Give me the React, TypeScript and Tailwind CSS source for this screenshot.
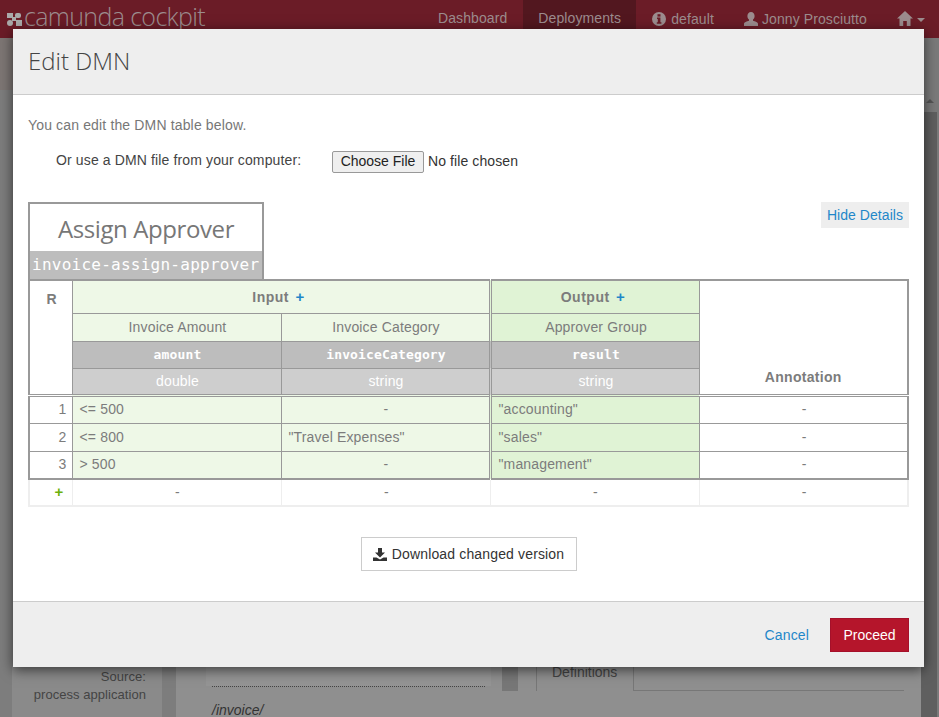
const ARIAL = 'font-["Liberation_Sans",Arial,sans-serif]';

const rules = [
  { n: 1, amount: '<= 500', category: '-', group: '"accounting"' },
  { n: 2, amount: '<= 800', category: '"Travel Expenses"', group: '"sales"' },
  { n: 3, amount: '> 500', category: '-', group: '"management"' },
];

const Logo = () => (
  <svg width="15" height="13" viewBox="0 0 15 13" className="text-[#aaa]" fill="currentColor">
    <rect x="0" y="0" width="6" height="5" />
    <rect x="8" y="0" width="6" height="5" rx="2" />
    <circle cx="3" cy="10" r="3" />
    <rect x="9" y="7" width="6" height="6" />
    <rect x="5" y="4" width="4" height="4" />
  </svg>
);

const InfoIcon = () => (
  <svg width="14" height="14" viewBox="0 0 14 14" className="mt-[3px]">
    <circle cx="7" cy="7" r="7" fill="#9c8c8e" />
    <rect x="5.5" y="2.2" width="3" height="2.4" fill="#6b1c27" />
    <path d="M5 5.6h3.4v4.6h1v1.5H4.8v-1.5h1V7H5z" fill="#6b1c27" />
  </svg>
);

const UserIcon = () => (
  <svg width="14" height="14" viewBox="0 0 14 14" className="mt-[3px]" fill="#9c8c8e">
    <path d="M7 0c2.2 0 3.6 1.8 3.6 4 0 1.6-.8 3-1.6 3.6v1.2c2 .6 5 1.4 5 3.2v2H0v-2c0-1.8 3-2.6 5-3.2V7.6C4.2 7 3.4 5.6 3.4 4 3.4 1.8 4.8 0 7 0z" />
  </svg>
);

const HomeIcon = () => (
  <svg width="16" height="15" viewBox="0 0 16 15" fill="#9c8c8e">
    <path d="M8 0l8 7.5h-2.5V15H9.8v-5H6.2v5H2.5V7.5H0z" />
  </svg>
);

const DownloadIcon = () => (
  <svg width="14" height="13" viewBox="0 0 14 13" fill="#333">
    <path d="M5 0h4v4.5h3L7 9.5l-5-5h3z" />
    <path d="M0 9.5h3.5L7 11.5l3.5-2H14V13H0z" />
  </svg>
);

const Navbar = () => (
  <div className="flex h-[38px] items-stretch bg-[#6b1c27] text-[14px] tracking-[0.1px] text-[#9c8c8e]">
    <div className="flex items-start pl-[7px]">
      <div className="mt-[13px]">
        <Logo />
      </div>
      <span className='ml-[2px] -mt-[3px] font-["Open_Sans",sans-serif] text-[25px] leading-[38px] font-light tracking-[-0.65px]'>
        camunda cockpit
      </span>
    </div>
    <div className="ml-auto flex items-stretch pr-[14px]">
      <div className="pl-[15px] pr-[16px] pt-[8px]">Dashboard</div>
      <div className="bg-[#52171f] px-[15px] pt-[8px]">Deployments</div>
      <div className="flex items-start gap-[5px] pl-[16px] pr-[15px] pt-[9px]">
        <InfoIcon />
        default
      </div>
      <div className="flex items-start gap-[4px] pl-[15px] pr-[15px] pt-[9px]">
        <UserIcon />
        Jonny Prosciutto
      </div>
      <div className="flex items-start gap-[4px] pl-[15px] pt-[11px]">
        <HomeIcon />
        <span className="mt-[7px] border-x-[4px] border-t-[4px] border-x-transparent border-t-[#9c8c8e]" />
      </div>
    </div>
  </div>
);

const Backdrop = () => (
  <div className="flex h-[679px] bg-[linear-gradient(#7d7674_52px,#7d7d7d_52px)]">
    <div className="ml-[12px] mt-[628px] h-[51px] w-[150px] bg-[#8a8a8a] pr-[16px] pt-[2px] text-right text-[13px] leading-[18px] tracking-[0.05px] text-[#444]">
      <div>Source:</div>
      <div>process application</div>
    </div>
    <div className="ml-[14px] flex flex-1 bg-[#8f8f8f] pt-[628px]">
      <div className="ml-[30px] h-[51px] w-[285px] text-[14px] text-[#333]">
        <div className="h-[20px] bg-[#949494]" />
        <div className="mx-[6px] h-[1px] border-t border-dotted border-[#444]" />
        <div className="ml-[6px] mt-[16px] leading-[14px] italic">/invoice/</div>
      </div>
      <div className="ml-[11px] h-[25px] w-[16px] bg-[#777]" />
      <div className="ml-[18px] h-[25px] w-[98px] border-x border-[#777] pl-[15px] text-[14px] leading-[12px] text-[#444]">
        Definitions
      </div>
      <div className="mt-[24px] h-[1px] w-[270px] bg-[#777]" />
    </div>
    <div className="flex w-[18px] flex-col items-center bg-[#7a7a7a] pt-[61px]">
      <div className="border-x-[4px] border-b-[4px] border-x-transparent border-b-[#555]" />
      <div className="mt-[9px] h-full w-[16px] self-start bg-[#5f5f5f]" />
    </div>
  </div>
);

const th = 'border border-[#999] pl-[2px] text-center';

const RuleTable = () => (
  <table className="w-[881px] table-fixed border-collapse text-[14px] tracking-[0.15px] text-[#7c7c7c]">
    <colgroup>
      <col className="w-[43px]" />
      <col className="w-[209px]" />
      <col className="w-[209px]" />
      <col className="w-[209px]" />
      <col />
    </colgroup>
    <thead className="border-x-2 border-t-2 border-[#999]">
      <tr className="h-[33px]">
        <th rowSpan={4} className={`${th} pt-[8px] align-top font-bold tracking-[0.4px]`}>R</th>
        <th colSpan={2} className={`${th} border-r-[3px] border-r-[#999] border-double bg-[#eef8e7] pr-[6px] font-bold tracking-[0.5px]`}>
          Input <span className="ml-[2px] text-[15px] text-[#1f87c9]">+</span>
        </th>
        <th className={`${th} bg-[#e0f3d5] pr-[6px] font-bold tracking-[0.5px]`}>
          Output <span className="ml-[2px] text-[15px] text-[#1f87c9]">+</span>
        </th>
        <th rowSpan={4} className="border border-[#999] pb-[6px] text-center align-bottom font-bold tracking-[0.3px]">Annotation</th>
      </tr>
      <tr className="h-[28px]">
        <td className={`${th} bg-[#eef8e7]`}>Invoice Amount</td>
        <td className={`${th} border-r-[3px] border-double bg-[#eef8e7]`}>Invoice Category</td>
        <td className={`${th} bg-[#e0f3d5]`}>Approver Group</td>
      </tr>
      <tr className='h-[27px] bg-[#bdbdbd] font-["DejaVu_Sans_Mono",monospace] text-[13px] font-bold text-white'>
        <td className={th}>amount</td>
        <td className={`${th} border-r-[3px] border-double`}>invoiceCategory</td>
        <td className={th}>result</td>
      </tr>
      <tr className="h-[27px] bg-[#cecece] text-white">
        <td className={th}>double</td>
        <td className={`${th} border-r-[3px] border-double`}>string</td>
        <td className={th}>string</td>
      </tr>
    </thead>
    <tbody className="border-x-2 border-t-[3px] border-b-2 border-double border-[#999] [border-bottom-style:solid]">
      {rules.map((rule) => (
        <tr key={rule.n} className="h-[28px]">
          <td className="border border-[#999] pr-[5px] text-right">{rule.n}</td>
          <td className="border border-[#999] bg-[#eef8e7] pl-[7px]">{rule.amount}</td>
          <td className={`border border-r-[3px] border-double border-[#999] bg-[#eef8e7] ${rule.category === '-' ? 'pl-[2px] text-center' : 'pl-[7px]'}`}>
            {rule.category}
          </td>
          <td className="border border-[#999] bg-[#e0f3d5] pl-[7px]">{rule.group}</td>
          <td className="border border-[#999] pl-[2px] text-center">-</td>
        </tr>
      ))}
    </tbody>
    <tfoot className="border-x-2 border-b-2 border-[#eee]">
      <tr className="h-[27px]">
        <td className="border-x border-[#eee] pr-[8px] text-right text-[15px] font-bold text-[#6cb10b]">+</td>
        <td className="border-x border-[#eee] pl-[2px] text-center">-</td>
        <td className="border-x border-[#eee] pl-[2px] text-center">-</td>
        <td className="border-x border-[#eee] pl-[2px] text-center">-</td>
        <td className="border-x border-[#eee] pl-[2px] text-center">-</td>
      </tr>
    </tfoot>
  </table>
);

const Modal = () => (
  <div className={`absolute left-[13px] top-[29px] w-[911px] bg-white text-[14px] text-[#777] shadow-[0_3px_12px_rgba(0,0,0,0.6)] ${ARIAL}`}>
    <div className="h-[66px] border-b border-[#ccc] bg-[#eee] pl-[15px] pt-[14px]">
      <h3 className='font-["Open_Sans",sans-serif] text-[24px] leading-[36px] font-light text-[#444]'>Edit DMN</h3>
    </div>
    <div className="h-[506px] px-[15px]">
      <p className="pt-[20px] leading-[20px] tracking-[0.15px]">You can edit the DMN table below.</p>
      <div className="mt-[15px] flex items-center pl-[28px] text-[#444]">
        <span className="mb-[2px] w-[276px] tracking-[0.13px]">Or use a DMN file from your computer:</span>
        <button className="h-[22px] w-[92px] rounded-[2px] border border-[#999] bg-[#efefef] pb-[1px] text-[14px] leading-[19px] text-[#222]">
          Choose File
        </button>
        <span className="ml-[4px] tracking-[0.1px] text-[#333]">No file chosen</span>
      </div>
      <div className="mt-[29px] flex items-start justify-between">
        <div className="w-[236px] border-x-2 border-t-2 border-[#999]">
          <div className='h-[47px] text-center font-["Open_Sans",sans-serif] text-[24px] leading-[50px] tracking-[-0.4px] text-[#777]'>
            Assign Approver
          </div>
          <div className='h-[28px] bg-[#bdbdbd] pl-[2px] font-["DejaVu_Sans_Mono",monospace] text-[16px] leading-[28px] tracking-[0.25px] text-white'>
            invoice-assign-approver
          </div>
        </div>
        <div className="bg-[#eee] px-[6px] text-[14px] leading-[26px] tracking-[0.05px] text-[#1f87c9]">Hide Details</div>
      </div>
      <RuleTable />
      <div className="mt-[30px] flex justify-center">
        <button className="flex h-[34px] w-[216px] items-center justify-center gap-[5px] border border-[#ccc] bg-white text-[14px] tracking-[0.15px] text-[#333]">
          <DownloadIcon />
          Download changed version
        </button>
      </div>
    </div>
    <div className="flex h-[66px] items-start justify-end border-t border-[#ccc] bg-[#eee] pr-[15px] pt-[16px]">
      <span className="mr-[21px] pt-[7px] leading-[20px] tracking-[0.15px] text-[#1f87c9]">Cancel</span>
      <button className="h-[34px] w-[79px] border border-[#a5102a] bg-[#b5152b] text-[14px] text-white">Proceed</button>
    </div>
  </div>
);

export default function App() {
  return (
    <div className={`relative h-[717px] overflow-hidden ${ARIAL}`}>
      <Navbar />
      <Backdrop />
      <Modal />
    </div>
  );
}
